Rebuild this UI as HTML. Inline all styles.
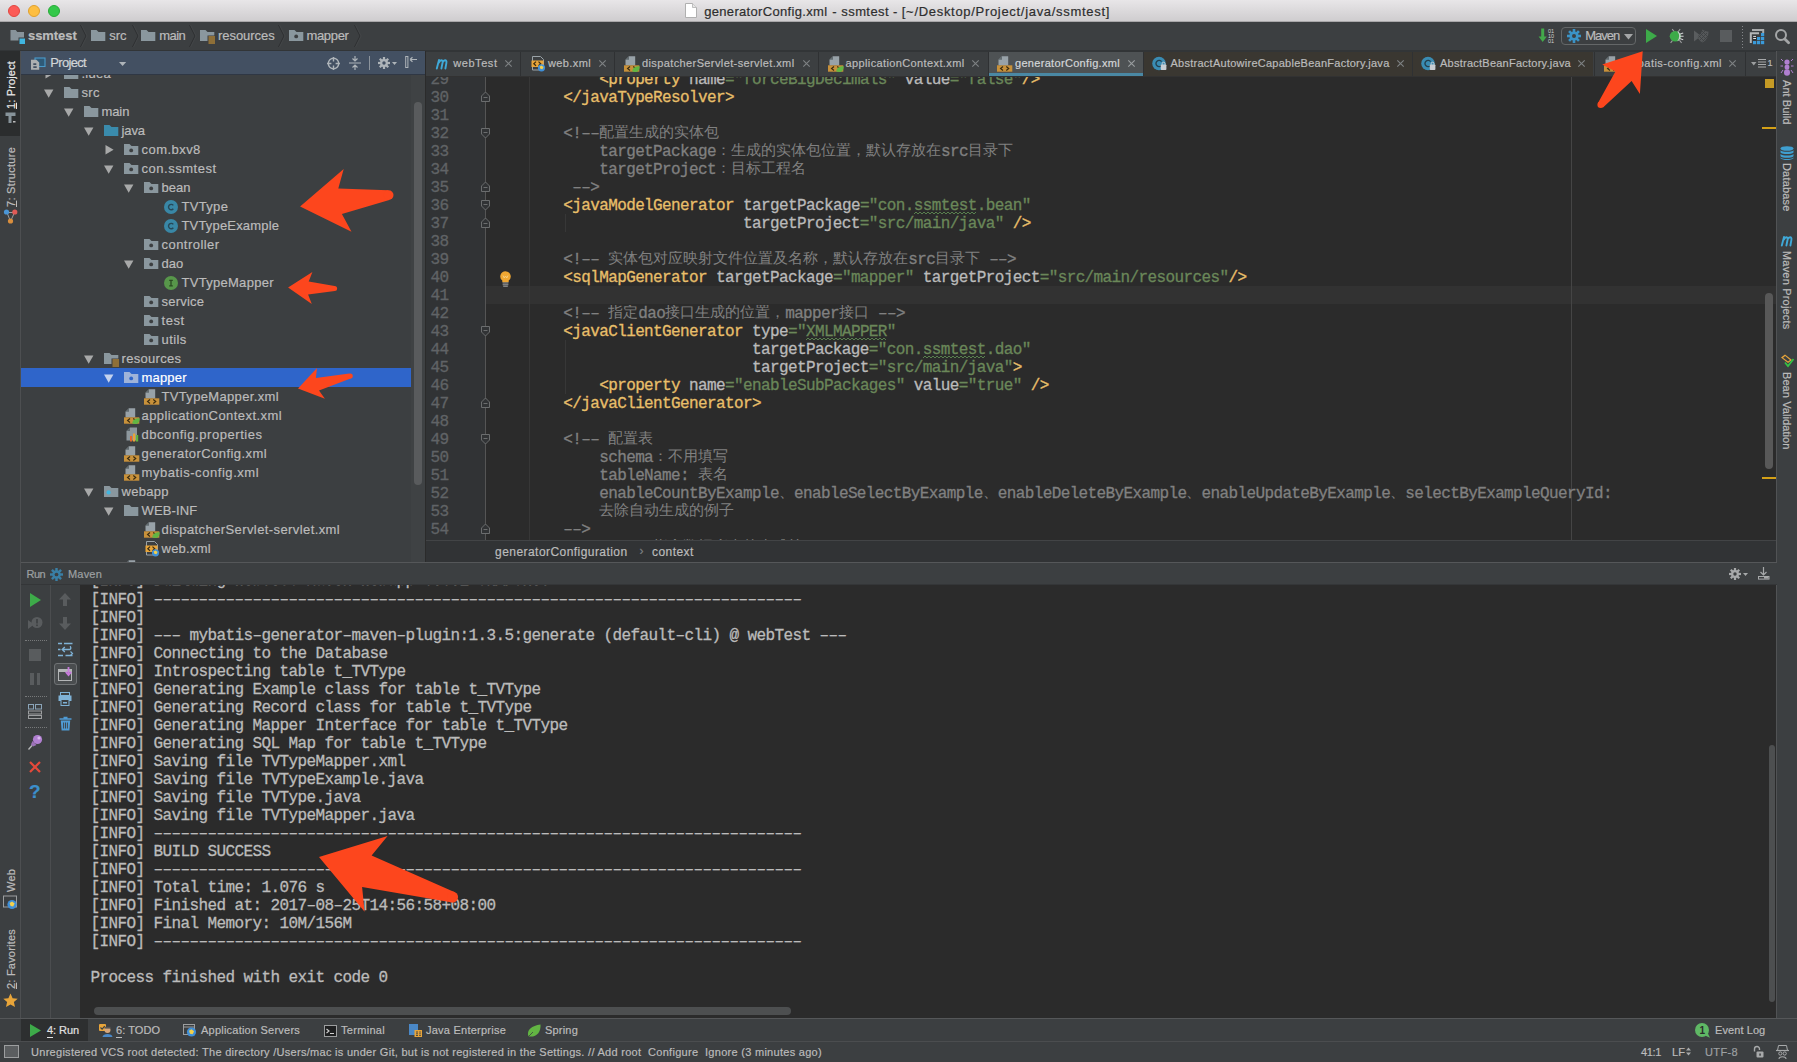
<!DOCTYPE html>
<html lang="en"><head><meta charset="utf-8"><title>generatorConfig.xml - ssmtest</title>
<style>
html,body{margin:0;padding:0;background:#3c3f41;}
body{width:1797px;height:1062px;overflow:hidden;font-family:"Liberation Sans",sans-serif;font-size:13px;color:#bbb;}
#app{position:relative;width:1797px;height:1062px;overflow:hidden;background:#3c3f41;}
.a{position:absolute;}
.t{position:absolute;white-space:pre;-webkit-text-stroke:0.2px;}
.r{position:absolute;}
svg{position:absolute;overflow:visible;}
#titlebar{left:0;top:0;width:1797px;height:22px;background:linear-gradient(#e8e6e8,#cfcdcf);border-bottom:1px solid #a9a7a9;box-sizing:border-box;}
.light{position:absolute;top:5px;width:12px;height:12px;border-radius:50%;box-sizing:border-box;}
#editor{left:426px;top:77px;width:1350px;height:463px;background:#2b2b2b;overflow:hidden;}
#gutter{left:0;top:0;width:59px;height:465px;background:#313335;border-right:1px solid #555;}
.ln{position:absolute;left:0;width:22.6px;text-align:right;font-family:"Liberation Mono",monospace;font-size:16px;letter-spacing:-0.6px;color:#606366;height:18px;line-height:18px;-webkit-text-stroke:0.3px;}
.cl{position:absolute;left:65.3px;height:18px;line-height:18px;font-family:"Liberation Mono",monospace;font-size:16px;letter-spacing:-0.613px;white-space:pre;color:#a9b7c6;-webkit-text-stroke:0.3px;}
.tg{color:#e8bf6a}.an{color:#bababa}.av{color:#6a8759}.cm{color:#808080}
.cj{display:inline-block;overflow:hidden;vertical-align:top;height:18px;white-space:nowrap;font-size:15px;letter-spacing:0;-webkit-text-stroke:0;}
.wv{position:relative;display:inline-block;}
#console{left:80px;top:585px;width:1696px;height:433px;background:#2b2b2b;overflow:hidden;}
.co{position:absolute;left:10.45px;height:18px;line-height:18px;font-family:"Liberation Mono",monospace;font-size:16px;letter-spacing:-0.6px;white-space:pre;color:#bbb;-webkit-text-stroke:0.3px;}
#tree{left:21px;top:75px;width:404px;height:487px;overflow:hidden;background:#3c3f41;}
.vt{position:absolute;white-space:pre;font-size:11px;color:#bbb;transform-origin:0 0;height:14px;line-height:14px;}

u{text-decoration:underline;text-underline-offset:1px;}

</style></head>
<body>
<div id="app">
<div id="titlebar" class="a">
<div class="light" style="left:8px;background:#fc5b57;border:1px solid #e2463f"></div>
<div class="light" style="left:28px;background:#fdbe41;border:1px solid #e0a02d"></div>
<div class="light" style="left:48px;background:#34c84a;border:1px solid #27ab37"></div>
<svg style="left:685px;top:3px" width="12" height="15" viewBox="0 0 12 15"><path d="M0.5,0.5h7l4,4v10h-11z" fill="#fff" stroke="#b0b0b0" stroke-width="1"/><path d="M7.5,0.5v4h4" fill="#e6e6e6" stroke="#b0b0b0" stroke-width="0.8"/></svg>
<div class="t " style="left:704.2px;top:2px;height:20px;line-height:20px;font-size:13px;color:#2e2e2e;letter-spacing:0.323px;">generatorConfig.xml</div>
<div class="t " style="left:832.3px;top:2px;height:20px;line-height:20px;font-size:13px;color:#2e2e2e;">-</div>
<div class="t " style="left:841.3px;top:2px;height:20px;line-height:20px;font-size:13px;color:#2e2e2e;letter-spacing:0.415px;">ssmtest</div>
<div class="t " style="left:892.9px;top:2px;height:20px;line-height:20px;font-size:13px;color:#2e2e2e;">-</div>
<div class="t " style="left:901.8px;top:2px;height:20px;line-height:20px;font-size:13px;color:#2e2e2e;letter-spacing:0.692px;">[~/Desktop/Project/java/ssmtest]</div>
</div>
<div class="r" style="left:0px;top:22px;width:1797px;height:29px;background:#3c3f41;"></div>
<div class="r" style="left:0px;top:50px;width:1797px;height:1px;background:#323537;"></div>
<svg style="left:10px;top:29px" width="16" height="15" viewBox="0 0 16 15"><path d="M0.5,1h5.2l1.6,2H14v8.5H0.5z" fill="#87939a"/><rect x="8.5" y="8.5" width="6.5" height="6.5" fill="#3c3f41"/><rect x="9.5" y="9.5" width="5.5" height="5.5" fill="#40b6e0"/></svg>
<div class="t " style="left:28px;top:22px;height:28px;line-height:28px;font-size:13px;color:#bbb;font-weight:bold;letter-spacing:-0.063px;">ssmtest</div>
<svg style="left:80px;top:25px" width="7" height="22" viewBox="0 0 7 22"><path d="M0.5,0L6,11L0.5,22" fill="none" stroke="#2c2e30" stroke-width="1"/><path d="M1.5,0L7,11L1.5,22" fill="none" stroke="#484b4d" stroke-width="0.6"/></svg>
<svg style="left:90.8px;top:30px" width="16" height="14" viewBox="0 0 16 14"><path d="M0,0h5.5l2,2H14.3v9H0z" fill="#8a979e"/></svg>
<div class="t " style="left:109.2px;top:22px;height:28px;line-height:28px;font-size:13px;color:#bbb;letter-spacing:0.052px;">src</div>
<svg style="left:131.5px;top:25px" width="7" height="22" viewBox="0 0 7 22"><path d="M0.5,0L6,11L0.5,22" fill="none" stroke="#2c2e30" stroke-width="1"/><path d="M1.5,0L7,11L1.5,22" fill="none" stroke="#484b4d" stroke-width="0.6"/></svg>
<svg style="left:140.8px;top:30px" width="16" height="14" viewBox="0 0 16 14"><path d="M0,0h5.5l2,2H14.3v9H0z" fill="#8a979e"/></svg>
<div class="t " style="left:159.2px;top:22px;height:28px;line-height:28px;font-size:13px;color:#bbb;letter-spacing:-0.522px;">main</div>
<svg style="left:189px;top:25px" width="7" height="22" viewBox="0 0 7 22"><path d="M0.5,0L6,11L0.5,22" fill="none" stroke="#2c2e30" stroke-width="1"/><path d="M1.5,0L7,11L1.5,22" fill="none" stroke="#484b4d" stroke-width="0.6"/></svg>
<svg style="left:199.7px;top:30px" width="16" height="14" viewBox="0 0 16 14"><path d="M0,0h5.5l2,2H14.3v9H0z" fill="#8a979e"/><rect x="7.5" y="5.5" width="8" height="8" fill="#3c3f41"/><path d="M8.5,7h6.5M8.5,9h6.5M8.5,11h6.5M8.5,13h6.5" stroke="#e0a030" stroke-width="1"/></svg>
<div class="t " style="left:218px;top:22px;height:28px;line-height:28px;font-size:13px;color:#bbb;letter-spacing:-0.042px;">resources</div>
<svg style="left:278px;top:25px" width="7" height="22" viewBox="0 0 7 22"><path d="M0.5,0L6,11L0.5,22" fill="none" stroke="#2c2e30" stroke-width="1"/><path d="M1.5,0L7,11L1.5,22" fill="none" stroke="#484b4d" stroke-width="0.6"/></svg>
<svg style="left:288.5px;top:30px" width="16" height="14" viewBox="0 0 16 14"><path d="M0,0h5.5l2,2H14.3v9H0z" fill="#8a979e"/><circle cx="7.2" cy="6.4" r="1.9" fill="#3c3f41"/></svg>
<div class="t " style="left:306.5px;top:22px;height:28px;line-height:28px;font-size:13px;color:#bbb;letter-spacing:-0.346px;">mapper</div>
<svg style="left:354px;top:25px" width="7" height="22" viewBox="0 0 7 22"><path d="M0.5,0L6,11L0.5,22" fill="none" stroke="#2c2e30" stroke-width="1"/><path d="M1.5,0L7,11L1.5,22" fill="none" stroke="#484b4d" stroke-width="0.6"/></svg>
<svg style="left:1539px;top:28px" width="16" height="16" viewBox="0 0 16 16"><path d="M2.2,0.5h3v8h2.6l-4.1,5.5l-4.1,-5.5h2.6z" fill="#43a84b"/><g fill="#d0d0d0" font-family="Liberation Sans" font-size="5.5"><text x="9" y="5">01</text><text x="9" y="10">10</text><text x="9" y="15">01</text></g></svg>
<div class="r" style="left:1561px;top:27px;width:75px;height:18px;border:1px solid #646768;border-radius:4px;box-sizing:border-box;background:#3c3f41"></div>
<svg style="left:1567px;top:29px" width="14" height="14" viewBox="0 0 14 14"><g fill="#3b93c6"><circle cx="7" cy="7" r="4.6"/><rect x="5.7" y="0" width="2.6" height="14" transform="rotate(0 7 7)"/><rect x="5.7" y="0" width="2.6" height="14" transform="rotate(45 7 7)"/><rect x="5.7" y="0" width="2.6" height="14" transform="rotate(90 7 7)"/><rect x="5.7" y="0" width="2.6" height="14" transform="rotate(135 7 7)"/></g><circle cx="7" cy="7" r="2" fill="#3c3f41"/></svg>
<div class="t " style="left:1585.3px;top:27px;height:18px;line-height:18px;font-size:13px;color:#bbb;letter-spacing:-1.026px;">Maven</div>
<svg style="left:1623.5px;top:33.5px" width="9" height="6" viewBox="0 0 9 6"><path d="M0,0h9L4.5,5.5z" fill="#a4a6a7"/></svg>
<svg style="left:1646px;top:29px" width="11" height="14" viewBox="0 0 11 14"><path d="M0,0L11,7L0,14z" fill="#3daa49"/></svg>
<svg style="left:1669px;top:28px" width="15" height="16" viewBox="0 0 15 16"><path d="M3.2,1.2l2.3,2.8M11.2,1.2l-2.3,2.8M1.6,14.8l2.2,-2.6M12.6,14.8l-2.2,-2.6" stroke="#9c9e9f" stroke-width="1.1" fill="none"/><ellipse cx="6.3" cy="8.3" rx="5.6" ry="5.3" fill="#3daa49"/><path d="M8.2,3.3a5.4,5.4 0 0 1 0,10a8,8 0 0 0 0,-10z" fill="#cfd1d2"/><path d="M10.6,6.2l3.6,-1.2M11,8.3h3.6M10.6,10.6l3.6,1.2" stroke="#cfd1d2" stroke-width="1.1"/></svg>
<svg style="left:1693px;top:28px" width="16" height="16" viewBox="0 0 16 16"><path d="M1,2.5L8,8L1,13.5z" fill="#5a5d5f"/><path d="M9.5,1.5c2,1.5 4,2 6,2c0,5 -2,9 -6,11c-2.5,-1.2 -4.2,-3.3 -5.2,-6l3.7,-3z" fill="#55585a"/><path d="M7,5l7,7M9,3l6,6M5.5,7.5l6,6" stroke="#3c3f41" stroke-width="0.8"/><path d="M7,12l7,-7M5.5,9.5l7.5,-7.5M9.5,13.5l5,-5" stroke="#3c3f41" stroke-width="0.8"/></svg>
<div class="r" style="left:1720px;top:30px;width:12px;height:12px;background:#595c5e;"></div>
<div class="r" style="left:1742px;top:26px;width:1px;height:23px;background:repeating-linear-gradient(to bottom,#85878a 0,#85878a 1px,transparent 1px,transparent 3px)"></div>
<svg style="left:1749px;top:28px" width="16" height="16" viewBox="0 0 16 16"><path d="M3,2h11.2v3" fill="none" stroke="#a9abac" stroke-width="2"/><path d="M1.8,15V5.3h8.2" fill="none" stroke="#b4b6b7" stroke-width="2"/><rect x="3.6" y="7" width="4" height="5.5" fill="#2f3133"/><path d="M4.2,8.4h2.8M4.2,10.5h2.8" stroke="#e0e0e0" stroke-width="1"/><g fill="#3a9ad9"><rect x="12" y="5" width="3.2" height="3.2"/><rect x="8" y="9" width="3.2" height="3.2"/><rect x="12" y="9" width="3.2" height="3.2"/><rect x="4" y="13" width="3.2" height="3.2"/><rect x="8" y="13" width="3.2" height="3.2"/><rect x="12" y="13" width="3.2" height="3.2"/></g></svg>
<svg style="left:1775px;top:29px" width="16" height="16" viewBox="0 0 16 16"><circle cx="6" cy="6.1" r="5" fill="none" stroke="#a4a6a7" stroke-width="2"/><path d="M9.8,9.9L13.6,13.7" stroke="#a4a6a7" stroke-width="2.8" stroke-linecap="round"/></svg>
<div class="r" style="left:0px;top:51px;width:21px;height:967px;background:#3c3f41;"></div>
<div class="r" style="left:19.5px;top:51px;width:1px;height:967px;background:#4d4f51;"></div>
<div class="r" style="left:0px;top:51px;width:20px;height:85px;background:#2b2d2e;"></div>
<div class="a" style="left:3.5px;top:109px;width:0;height:0;transform:rotate(-90deg);transform-origin:0 0"><div class="t " style="left:0px;top:0px;height:14px;line-height:14px;font-size:11px;color:#e8e8e8;position:static;display:block;letter-spacing:0.153px;"><u>1</u>: Project</div></div>
<svg style="left:5px;top:112px" width="11" height="12" viewBox="0 0 11 12"><path d="M0.5,0.5h10v3.5h-4v7h-3v-7h-3z" fill="#87939a"/><rect x="8" y="9" width="2.5" height="1.5" fill="#bbb"/></svg>
<div class="a" style="left:3.5px;top:207px;width:0;height:0;transform:rotate(-90deg);transform-origin:0 0"><div class="t " style="left:0px;top:0px;height:14px;line-height:14px;font-size:11px;color:#bbb;position:static;display:block;letter-spacing:0.262px;"><u>7</u>: Structure</div></div>
<svg style="left:3px;top:209px" width="15" height="15" viewBox="0 0 15 15"><path d="M4,3.5L7.5,12.5L11.5,3.5z" fill="none" stroke="#9c9e9f" stroke-width="1"/><circle cx="3.5" cy="3" r="2.6" fill="#4a96d6"/><circle cx="11.8" cy="3" r="2.6" fill="#e05a56"/><circle cx="7.5" cy="12" r="2.6" fill="#d88e3d"/></svg>
<div class="a" style="left:3.5px;top:892px;width:0;height:0;transform:rotate(-90deg);transform-origin:0 0"><div class="t " style="left:0px;top:0px;height:14px;line-height:14px;font-size:11px;color:#bbb;position:static;display:block;letter-spacing:0.193px;">Web</div></div>
<svg style="left:3px;top:895px" width="15" height="15" viewBox="0 0 15 15"><rect x="0.5" y="1" width="13" height="11" fill="none" stroke="#9c9e9f"/><circle cx="9" cy="9.5" r="4.6" fill="#3f8fd8"/><path d="M6.6,8l2.5,-1.6l2.6,2l-1.5,3l-2.6,-0.5z" fill="#f3d04c"/></svg>
<div class="a" style="left:3.5px;top:989px;width:0;height:0;transform:rotate(-90deg);transform-origin:0 0"><div class="t " style="left:0px;top:0px;height:14px;line-height:14px;font-size:11px;color:#bbb;position:static;display:block;letter-spacing:0.211px;"><u>2</u>: Favorites</div></div>
<svg style="left:3px;top:993px" width="15" height="14" viewBox="0 0 15 14"><path d="M7.5,0.5L9.6,5.2L14.7,5.7L10.9,9.1L12,14L7.5,11.4L3,14L4.1,9.1L0.3,5.7L5.4,5.2z" fill="#e8a53a"/></svg>
<div class="r" style="left:21px;top:51px;width:404px;height:23px;background:#435062;"></div>
<div class="r" style="left:21px;top:73.7px;width:404px;height:1px;background:#2f3744;"></div>
<svg style="left:30.8px;top:56.5px" width="15" height="13" viewBox="0 0 15 13"><rect x="4" y="1" width="10" height="8.5" fill="#2f5a78" stroke="#4a9bcb" stroke-width="1.1"/><path d="M0,2.8h5.4l2.8,2.8v7.2H0z" fill="#adafb1"/><path d="M2.3,6.3h3v1.8h-3zM2.3,9.2h3.4v1.8h-3.4z" fill="#435062"/></svg>
<div class="t " style="left:50.3px;top:52px;height:22px;line-height:22px;font-size:13px;color:#d2d5d8;letter-spacing:-0.681px;">Project</div>
<svg style="left:118.7px;top:62px" width="8" height="5" viewBox="0 0 8 5"><path d="M0,0h7.2L3.6,4z" fill="#aeb4b9"/></svg>
<svg style="left:327px;top:56.5px" width="13" height="13" viewBox="0 0 13 13"><circle cx="6.5" cy="6.5" r="5.2" fill="none" stroke="#aeb4b9" stroke-width="1.4"/><path d="M6.5,0v4.4M6.5,8.6v4.4M0,6.5h4.4M8.6,6.5h4.4" stroke="#aeb4b9" stroke-width="1.4"/></svg>
<svg style="left:349px;top:56px" width="12" height="14" viewBox="0 0 12 14"><path d="M0,7h12M6,0v4.5M6,14v-4.5M3.5,2.5L6,5L8.5,2.5M3.5,11.5L6,9L8.5,11.5" fill="none" stroke="#aeb4b9" stroke-width="1.2"/></svg>
<div class="r" style="left:369px;top:56px;width:1px;height:14px;background:#8c949c;"></div>
<svg style="left:378px;top:56.5px" width="12" height="12" viewBox="0 0 14 14"><g fill="#aeb4b9"><circle cx="7" cy="7" r="4.6"/><rect x="5.7" y="0" width="2.6" height="14" transform="rotate(0 7 7)"/><rect x="5.7" y="0" width="2.6" height="14" transform="rotate(45 7 7)"/><rect x="5.7" y="0" width="2.6" height="14" transform="rotate(90 7 7)"/><rect x="5.7" y="0" width="2.6" height="14" transform="rotate(135 7 7)"/></g><circle cx="7" cy="7" r="2" fill="#435062"/></svg>
<svg style="left:391.5px;top:62px" width="5" height="3" viewBox="0 0 5 3"><path d="M0,0h5L2.5,3z" fill="#aeb4b9"/></svg>
<svg style="left:405px;top:56px" width="13" height="13" viewBox="0 0 13 13"><rect x="0.7" y="0.5" width="2.2" height="11" fill="none" stroke="#aeb4b9" stroke-width="1"/><path d="M5,3.5h7M5,3.5l2.5,-2.2M5,3.5l2.5,2.2" stroke="#aeb4b9" stroke-width="1.2" fill="none"/></svg>
<div id="tree" class="a">
<svg style="left:24px;top:-6px" width="9" height="10" viewBox="0 0 9 10"><path d="M0.5,0L8.6,4.7L0.5,9.4z" fill="#a8a9a9"/></svg>
<svg style="left:43px;top:-7px" width="16" height="14" viewBox="0 0 16 14"><path d="M0,0h5.5l2,2H14.3v9H0z" fill="#8a979e"/></svg>
<div class="t " style="left:60.5px;top:-11px;height:19px;line-height:19px;font-size:13px;color:#bbb;letter-spacing:0.259px;">.idea</div>
<svg style="left:23px;top:14px" width="10" height="9" viewBox="0 0 10 9"><path d="M0,0.5h9.4L4.7,8.8z" fill="#a8a9a9"/></svg>
<svg style="left:43px;top:12px" width="16" height="14" viewBox="0 0 16 14"><path d="M0,0h5.5l2,2H14.3v9H0z" fill="#8a979e"/></svg>
<div class="t " style="left:60.5px;top:8px;height:19px;line-height:19px;font-size:13px;color:#bbb;letter-spacing:0.352px;">src</div>
<svg style="left:43px;top:33px" width="10" height="9" viewBox="0 0 10 9"><path d="M0,0.5h9.4L4.7,8.8z" fill="#a8a9a9"/></svg>
<svg style="left:63px;top:31px" width="16" height="14" viewBox="0 0 16 14"><path d="M0,0h5.5l2,2H14.3v9H0z" fill="#8a979e"/></svg>
<div class="t " style="left:80.5px;top:27px;height:19px;line-height:19px;font-size:13px;color:#bbb;letter-spacing:-0.097px;">main</div>
<svg style="left:63px;top:52px" width="10" height="9" viewBox="0 0 10 9"><path d="M0,0.5h9.4L4.7,8.8z" fill="#a8a9a9"/></svg>
<svg style="left:83px;top:50px" width="16" height="14" viewBox="0 0 16 14"><path d="M0,0h5.5l2,2H14.3v9H0z" fill="#3a8bac"/></svg>
<div class="t " style="left:100.5px;top:46px;height:19px;line-height:19px;font-size:13px;color:#bbb;letter-spacing:-0.090px;">java</div>
<svg style="left:84px;top:70px" width="9" height="10" viewBox="0 0 9 10"><path d="M0.5,0L8.6,4.7L0.5,9.4z" fill="#a8a9a9"/></svg>
<svg style="left:103px;top:69px" width="16" height="14" viewBox="0 0 16 14"><path d="M0,0h5.5l2,2H14.3v9H0z" fill="#8a979e"/><circle cx="7.2" cy="6.4" r="1.9" fill="#3c3f41"/></svg>
<div class="t " style="left:120.5px;top:65px;height:19px;line-height:19px;font-size:13px;color:#bbb;letter-spacing:0.457px;">com.bxv8</div>
<svg style="left:83px;top:90px" width="10" height="9" viewBox="0 0 10 9"><path d="M0,0.5h9.4L4.7,8.8z" fill="#a8a9a9"/></svg>
<svg style="left:103px;top:88px" width="16" height="14" viewBox="0 0 16 14"><path d="M0,0h5.5l2,2H14.3v9H0z" fill="#8a979e"/><circle cx="7.2" cy="6.4" r="1.9" fill="#3c3f41"/></svg>
<div class="t " style="left:120.5px;top:84px;height:19px;line-height:19px;font-size:13px;color:#bbb;letter-spacing:0.531px;">con.ssmtest</div>
<svg style="left:103px;top:109px" width="10" height="9" viewBox="0 0 10 9"><path d="M0,0.5h9.4L4.7,8.8z" fill="#a8a9a9"/></svg>
<svg style="left:123px;top:107px" width="16" height="14" viewBox="0 0 16 14"><path d="M0,0h5.5l2,2H14.3v9H0z" fill="#8a979e"/><circle cx="7.2" cy="6.4" r="1.9" fill="#3c3f41"/></svg>
<div class="t " style="left:140.5px;top:103px;height:19px;line-height:19px;font-size:13px;color:#bbb;letter-spacing:0.020px;">bean</div>
<svg style="left:143px;top:125px" width="14" height="14" viewBox="0 0 14 14"><circle cx="7" cy="7" r="7" fill="#3987a6"/><path d="M9.3,5.4A2.7,2.7 0 1 0 9.3,8.8" fill="none" stroke="#264858" stroke-width="1.4"/></svg>
<div class="t " style="left:160.5px;top:122px;height:19px;line-height:19px;font-size:13px;color:#bbb;letter-spacing:0.317px;">TVType</div>
<svg style="left:143px;top:144px" width="14" height="14" viewBox="0 0 14 14"><circle cx="7" cy="7" r="7" fill="#3987a6"/><path d="M9.3,5.4A2.7,2.7 0 1 0 9.3,8.8" fill="none" stroke="#264858" stroke-width="1.4"/></svg>
<div class="t " style="left:160.5px;top:141px;height:19px;line-height:19px;font-size:13px;color:#bbb;letter-spacing:0.171px;">TVTypeExample</div>
<svg style="left:123px;top:164px" width="16" height="14" viewBox="0 0 16 14"><path d="M0,0h5.5l2,2H14.3v9H0z" fill="#8a979e"/><circle cx="7.2" cy="6.4" r="1.9" fill="#3c3f41"/></svg>
<div class="t " style="left:140.5px;top:160px;height:19px;line-height:19px;font-size:13px;color:#bbb;letter-spacing:0.463px;">controller</div>
<svg style="left:103px;top:185px" width="10" height="9" viewBox="0 0 10 9"><path d="M0,0.5h9.4L4.7,8.8z" fill="#a8a9a9"/></svg>
<svg style="left:123px;top:183px" width="16" height="14" viewBox="0 0 16 14"><path d="M0,0h5.5l2,2H14.3v9H0z" fill="#8a979e"/><circle cx="7.2" cy="6.4" r="1.9" fill="#3c3f41"/></svg>
<div class="t " style="left:140.5px;top:179px;height:19px;line-height:19px;font-size:13px;color:#bbb;letter-spacing:-0.001px;">dao</div>
<svg style="left:143px;top:201px" width="14" height="14" viewBox="0 0 14 14"><circle cx="7" cy="7" r="7" fill="#57964a"/><path d="M5.2,4.4h3.6M5.2,9.8h3.6M7,4.4v5.4" fill="none" stroke="#2a4a22" stroke-width="1.3"/></svg>
<div class="t " style="left:160.5px;top:198px;height:19px;line-height:19px;font-size:13px;color:#bbb;letter-spacing:0.285px;">TVTypeMapper</div>
<svg style="left:123px;top:221px" width="16" height="14" viewBox="0 0 16 14"><path d="M0,0h5.5l2,2H14.3v9H0z" fill="#8a979e"/><circle cx="7.2" cy="6.4" r="1.9" fill="#3c3f41"/></svg>
<div class="t " style="left:140.5px;top:217px;height:19px;line-height:19px;font-size:13px;color:#bbb;letter-spacing:0.216px;">service</div>
<svg style="left:123px;top:240px" width="16" height="14" viewBox="0 0 16 14"><path d="M0,0h5.5l2,2H14.3v9H0z" fill="#8a979e"/><circle cx="7.2" cy="6.4" r="1.9" fill="#3c3f41"/></svg>
<div class="t " style="left:140.5px;top:236px;height:19px;line-height:19px;font-size:13px;color:#bbb;letter-spacing:0.533px;">test</div>
<svg style="left:123px;top:259px" width="16" height="14" viewBox="0 0 16 14"><path d="M0,0h5.5l2,2H14.3v9H0z" fill="#8a979e"/><circle cx="7.2" cy="6.4" r="1.9" fill="#3c3f41"/></svg>
<div class="t " style="left:140.5px;top:255px;height:19px;line-height:19px;font-size:13px;color:#bbb;letter-spacing:0.415px;">utils</div>
<svg style="left:63px;top:280px" width="10" height="9" viewBox="0 0 10 9"><path d="M0,0.5h9.4L4.7,8.8z" fill="#a8a9a9"/></svg>
<svg style="left:83px;top:278px" width="16" height="14" viewBox="0 0 16 14"><path d="M0,0h5.5l2,2H14.3v9H0z" fill="#8a979e"/><rect x="7.5" y="5.5" width="8" height="8" fill="#3c3f41"/><path d="M8.5,7h6.5M8.5,9h6.5M8.5,11h6.5M8.5,13h6.5" stroke="#e0a030" stroke-width="1"/></svg>
<div class="t " style="left:100.5px;top:274px;height:19px;line-height:19px;font-size:13px;color:#bbb;letter-spacing:0.314px;">resources</div>
<div class="r" style="left:0px;top:293px;width:390px;height:19px;background:#2f65ca;"></div>
<svg style="left:83px;top:299px" width="10" height="9" viewBox="0 0 10 9"><path d="M0,0.5h9.4L4.7,8.8z" fill="#c4d2ee"/></svg>
<svg style="left:103px;top:297px" width="16" height="14" viewBox="0 0 16 14"><path d="M0,0h5.5l2,2H14.3v9H0z" fill="#9fb3d9"/><circle cx="7.2" cy="6.4" r="1.9" fill="#2f65ca"/></svg>
<div class="t " style="left:120.5px;top:293px;height:19px;line-height:19px;font-size:13px;color:#fff;letter-spacing:0.187px;">mapper</div>
<svg style="left:122.7px;top:314px" width="16" height="16" viewBox="0 0 16 16"><path d="M5,0.3H11.2V9.4H1.5V3.8z" fill="#98a2a8"/><path d="M1.5,3.8L5,0.3V3.8z" fill="#626b70"/><rect x="0" y="9.3" width="15.3" height="6.4" fill="#c8913a"/><path d="M6,10.5L3.6,12.5L6,14.5M9.3,10.5L11.7,12.5L9.3,14.5" fill="none" stroke="#3a2c12" stroke-width="1.2"/></svg>
<div class="t " style="left:140.5px;top:312px;height:19px;line-height:19px;font-size:13px;color:#bbb;letter-spacing:0.337px;">TVTypeMapper.xml</div>
<svg style="left:102.7px;top:333px" width="16" height="16" viewBox="0 0 16 16"><path d="M5,0.3H11.2V9.4H1.5V3.8z" fill="#98a2a8"/><path d="M1.5,3.8L5,0.3V3.8z" fill="#626b70"/><rect x="0" y="9.3" width="15.3" height="6.4" fill="#c8913a"/><path d="M6,10.5L3.6,12.5L6,14.5M9.3,10.5L11.7,12.5L9.3,14.5" fill="none" stroke="#3a2c12" stroke-width="1.2"/><path d="M8.3,15.6c0,-3.8 3,-5.4 7.4,-5.4c0,4.2 -2.2,7 -7.4,5.4z" fill="#62b543"/></svg>
<div class="t " style="left:120.5px;top:331px;height:19px;line-height:19px;font-size:13px;color:#bbb;letter-spacing:0.446px;">applicationContext.xml</div>
<svg style="left:102.5px;top:351.5px" width="16" height="16" viewBox="0 0 16 16"><path d="M6,0.5h7v13H2.5V4z" fill="#8d979d"/><path d="M2.5,4L6,0.5V4z" fill="#5d666b"/><rect x="6" y="9" width="2.2" height="5.5" fill="#e0662c"/><rect x="9" y="6.5" width="2.2" height="8" fill="#e8a53a"/><rect x="12" y="8" width="2.2" height="6.5" fill="#5fb33f"/></svg>
<div class="t " style="left:120.5px;top:350px;height:19px;line-height:19px;font-size:13px;color:#bbb;letter-spacing:0.554px;">dbconfig.properties</div>
<svg style="left:102.7px;top:371px" width="16" height="16" viewBox="0 0 16 16"><path d="M5,0.3H11.2V9.4H1.5V3.8z" fill="#98a2a8"/><path d="M1.5,3.8L5,0.3V3.8z" fill="#626b70"/><rect x="0" y="9.3" width="15.3" height="6.4" fill="#c8913a"/><path d="M6,10.5L3.6,12.5L6,14.5M9.3,10.5L11.7,12.5L9.3,14.5" fill="none" stroke="#3a2c12" stroke-width="1.2"/></svg>
<div class="t " style="left:120.5px;top:369px;height:19px;line-height:19px;font-size:13px;color:#bbb;letter-spacing:0.449px;">generatorConfig.xml</div>
<svg style="left:102.7px;top:390px" width="16" height="16" viewBox="0 0 16 16"><path d="M5,0.3H11.2V9.4H1.5V3.8z" fill="#98a2a8"/><path d="M1.5,3.8L5,0.3V3.8z" fill="#626b70"/><rect x="0" y="9.3" width="15.3" height="6.4" fill="#c8913a"/><path d="M6,10.5L3.6,12.5L6,14.5M9.3,10.5L11.7,12.5L9.3,14.5" fill="none" stroke="#3a2c12" stroke-width="1.2"/></svg>
<div class="t " style="left:120.5px;top:388px;height:19px;line-height:19px;font-size:13px;color:#bbb;letter-spacing:0.559px;">mybatis-config.xml</div>
<svg style="left:63px;top:413px" width="10" height="9" viewBox="0 0 10 9"><path d="M0,0.5h9.4L4.7,8.8z" fill="#a8a9a9"/></svg>
<svg style="left:83px;top:411px" width="16" height="14" viewBox="0 0 16 14"><path d="M0,0h5.5l2,2H14.3v9H0z" fill="#8a979e"/><circle cx="4.6" cy="6.4" r="2.1" fill="#40b6e0"/></svg>
<div class="t " style="left:100.5px;top:407px;height:19px;line-height:19px;font-size:13px;color:#bbb;letter-spacing:0.276px;">webapp</div>
<svg style="left:83px;top:432px" width="10" height="9" viewBox="0 0 10 9"><path d="M0,0.5h9.4L4.7,8.8z" fill="#a8a9a9"/></svg>
<svg style="left:103px;top:430px" width="16" height="14" viewBox="0 0 16 14"><path d="M0,0h5.5l2,2H14.3v9H0z" fill="#8a979e"/></svg>
<div class="t " style="left:120.5px;top:426px;height:19px;line-height:19px;font-size:13px;color:#bbb;letter-spacing:0.116px;">WEB-INF</div>
<svg style="left:122.7px;top:447px" width="16" height="16" viewBox="0 0 16 16"><path d="M5,0.3H11.2V9.4H1.5V3.8z" fill="#98a2a8"/><path d="M1.5,3.8L5,0.3V3.8z" fill="#626b70"/><rect x="0" y="9.3" width="15.3" height="6.4" fill="#c8913a"/><path d="M6,10.5L3.6,12.5L6,14.5M9.3,10.5L11.7,12.5L9.3,14.5" fill="none" stroke="#3a2c12" stroke-width="1.2"/><path d="M8.3,15.6c0,-3.8 3,-5.4 7.4,-5.4c0,4.2 -2.2,7 -7.4,5.4z" fill="#62b543"/></svg>
<div class="t " style="left:140.5px;top:445px;height:19px;line-height:19px;font-size:13px;color:#bbb;letter-spacing:0.404px;">dispatcherServlet-servlet.xml</div>
<svg style="left:122.5px;top:465.5px" width="16" height="16" viewBox="0 0 16 16"><path d="M2.5,0.5h8l3,3v10.5h-11z" fill="none" stroke="#9aa3a8" stroke-width="1"/><rect x="1.5" y="4.5" width="12" height="6.5" fill="#e8a53a"/><path d="M6,5.6L3.8,7.7L6,9.8M8.5,5.6L10.7,7.7L8.5,9.8" fill="none" stroke="#3a2c12" stroke-width="1.2"/><circle cx="11.5" cy="11.8" r="3.6" fill="#3f8fd8"/><path d="M9.6,10.6l2,-1.2l2,1.5l-1.2,2.3l-2,-0.4z" fill="#f3d04c"/></svg>
<div class="t " style="left:140.5px;top:464px;height:19px;line-height:19px;font-size:13px;color:#bbb;letter-spacing:0.245px;">web.xml</div>
<svg style="left:102.7px;top:485px" width="16" height="16" viewBox="0 0 16 16"><path d="M5,0.3H11.2V9.4H1.5V3.8z" fill="#98a2a8"/><path d="M1.5,3.8L5,0.3V3.8z" fill="#626b70"/><rect x="0" y="9.3" width="15.3" height="6.4" fill="#c8913a"/><path d="M6,10.5L3.6,12.5L6,14.5M9.3,10.5L11.7,12.5L9.3,14.5" fill="none" stroke="#3a2c12" stroke-width="1.2"/></svg>
<div class="t " style="left:120.5px;top:483px;height:19px;line-height:19px;font-size:13px;color:#bbb;letter-spacing:-0.312px;">index.jsp</div>
<div class="r" style="left:390px;top:0px;width:14px;height:487px;background:#3f4244;"></div>
<div class="r" style="left:393px;top:27px;width:8px;height:383px;border-radius:4px;background:#595b5d"></div>
</div>
<div class="r" style="left:425px;top:51px;width:1px;height:512px;background:#2b2b2b;"></div>
<div class="r" style="left:426px;top:51px;width:1351px;height:26px;background:#3c3f41;"></div>
<div class="r" style="left:426px;top:51px;width:1351px;height:1px;background:#323537;"></div>
<div class="r" style="left:1143px;top:52px;width:450px;height:24px;background:#3a3731;"></div>
<div class="r" style="left:988px;top:52px;width:154.5px;height:24px;background:#4e5254;"></div>
<div class="r" style="left:988px;top:73px;width:154.5px;height:3px;background:#4a88a4;"></div>
<div class="r" style="left:426px;top:76px;width:1351px;height:1px;background:#323232;"></div>
<div class="r" style="left:520px;top:52px;width:1px;height:24px;background:#2f3133;"></div>
<div class="r" style="left:614px;top:52px;width:1px;height:24px;background:#2f3133;"></div>
<div class="r" style="left:817.5px;top:52px;width:1px;height:24px;background:#2f3133;"></div>
<div class="r" style="left:987.5px;top:52px;width:1px;height:24px;background:#2f3133;"></div>
<div class="r" style="left:1142.5px;top:52px;width:1px;height:24px;background:#2f3133;"></div>
<div class="r" style="left:1412px;top:52px;width:1px;height:24px;background:#2f3133;"></div>
<div class="r" style="left:1593.5px;top:52px;width:1px;height:24px;background:#2f3133;"></div>
<div class="r" style="left:1745px;top:52px;width:1px;height:24px;background:#2f3133;"></div>
<svg style="left:435px;top:57.5px" width="14" height="11" viewBox="0 0 14 11"><path d="M1.8,10.5L4,2M4,4.5C5,1.5 8,1.5 7.6,4.5L6.4,10.5M7.6,4.5C8.8,1.5 12,1.5 11.4,4.8L10.4,10.5" fill="none" stroke="#3fa9d8" stroke-width="1.9" stroke-linecap="round"/></svg>
<div class="t " style="left:453.3px;top:52px;height:23px;line-height:23px;font-size:11px;color:#bbb;letter-spacing:0.549px;">webTest</div>
<svg style="left:504.5px;top:59.5px" width="7" height="7" viewBox="0 0 7 7"><path d="M0.3,0.3L6.7,6.7M6.7,0.3L0.3,6.7" stroke="#7e8284" stroke-width="1.1"/></svg>
<svg style="left:530px;top:56px" width="16" height="16" viewBox="0 0 16 16"><path d="M2.5,0.5h8l3,3v10.5h-11z" fill="none" stroke="#9aa3a8" stroke-width="1"/><rect x="1.5" y="4.5" width="12" height="6.5" fill="#e8a53a"/><path d="M6,5.6L3.8,7.7L6,9.8M8.5,5.6L10.7,7.7L8.5,9.8" fill="none" stroke="#3a2c12" stroke-width="1.2"/><circle cx="11.5" cy="11.8" r="3.6" fill="#3f8fd8"/><path d="M9.6,10.6l2,-1.2l2,1.5l-1.2,2.3l-2,-0.4z" fill="#f3d04c"/></svg>
<div class="t " style="left:548px;top:52px;height:23px;line-height:23px;font-size:11px;color:#bbb;letter-spacing:0.379px;">web.xml</div>
<svg style="left:599.0px;top:59.5px" width="7" height="7" viewBox="0 0 7 7"><path d="M0.3,0.3L6.7,6.7M6.7,0.3L0.3,6.7" stroke="#7e8284" stroke-width="1.1"/></svg>
<svg style="left:623.8px;top:56px" width="16" height="16" viewBox="0 0 16 16"><path d="M5,0.3H11.2V9.4H1.5V3.8z" fill="#98a2a8"/><path d="M1.5,3.8L5,0.3V3.8z" fill="#626b70"/><rect x="0" y="9.3" width="15.3" height="6.4" fill="#c8913a"/><path d="M6,10.5L3.6,12.5L6,14.5M9.3,10.5L11.7,12.5L9.3,14.5" fill="none" stroke="#3a2c12" stroke-width="1.2"/><path d="M8.3,15.6c0,-3.8 3,-5.4 7.4,-5.4c0,4.2 -2.2,7 -7.4,5.4z" fill="#62b543"/></svg>
<div class="t " style="left:642px;top:52px;height:23px;line-height:23px;font-size:11px;color:#bbb;letter-spacing:0.389px;">dispatcherServlet-servlet.xml</div>
<svg style="left:802.5px;top:59.5px" width="7" height="7" viewBox="0 0 7 7"><path d="M0.3,0.3L6.7,6.7M6.7,0.3L0.3,6.7" stroke="#7e8284" stroke-width="1.1"/></svg>
<svg style="left:827.7px;top:56px" width="16" height="16" viewBox="0 0 16 16"><path d="M5,0.3H11.2V9.4H1.5V3.8z" fill="#98a2a8"/><path d="M1.5,3.8L5,0.3V3.8z" fill="#626b70"/><rect x="0" y="9.3" width="15.3" height="6.4" fill="#c8913a"/><path d="M6,10.5L3.6,12.5L6,14.5M9.3,10.5L11.7,12.5L9.3,14.5" fill="none" stroke="#3a2c12" stroke-width="1.2"/><path d="M8.3,15.6c0,-3.8 3,-5.4 7.4,-5.4c0,4.2 -2.2,7 -7.4,5.4z" fill="#62b543"/></svg>
<div class="t " style="left:845.5px;top:52px;height:23px;line-height:23px;font-size:11px;color:#bbb;letter-spacing:0.379px;">applicationContext.xml</div>
<svg style="left:972.0px;top:59.5px" width="7" height="7" viewBox="0 0 7 7"><path d="M0.3,0.3L6.7,6.7M6.7,0.3L0.3,6.7" stroke="#7e8284" stroke-width="1.1"/></svg>
<svg style="left:996.7px;top:56px" width="16" height="16" viewBox="0 0 16 16"><path d="M5,0.3H11.2V9.4H1.5V3.8z" fill="#98a2a8"/><path d="M1.5,3.8L5,0.3V3.8z" fill="#626b70"/><rect x="0" y="9.3" width="15.3" height="6.4" fill="#c8913a"/><path d="M6,10.5L3.6,12.5L6,14.5M9.3,10.5L11.7,12.5L9.3,14.5" fill="none" stroke="#3a2c12" stroke-width="1.2"/></svg>
<div class="t " style="left:1015px;top:52px;height:23px;line-height:23px;font-size:11px;color:#d4d6d8;letter-spacing:0.312px;">generatorConfig.xml</div>
<svg style="left:1127.5px;top:59.5px" width="7" height="7" viewBox="0 0 7 7"><path d="M0.3,0.3L6.7,6.7M6.7,0.3L0.3,6.7" stroke="#9a9ea0" stroke-width="1.1"/></svg>
<svg style="left:1152px;top:56px" width="15" height="15" viewBox="0 0 15 15"><circle cx="7" cy="7.5" r="6.8" fill="#3a8cb3"/><path d="M9.6,5.7A3.1,3.1 0 1 0 9.6,9.3" fill="none" stroke="#23404f" stroke-width="1.4"/><rect x="8.8" y="8.5" width="5.6" height="5.5" rx="0.8" fill="#c9ced2"/><path d="M10.2,8.8v-1.2a1.4,1.4 0 0 1 2.8,0v1.2" fill="none" stroke="#c9ced2" stroke-width="1"/></svg>
<div class="t " style="left:1170.5px;top:52px;height:23px;line-height:23px;font-size:11px;color:#bbb;letter-spacing:0.259px;">AbstractAutowireCapableBeanFactory.java</div>
<svg style="left:1397.0px;top:59.5px" width="7" height="7" viewBox="0 0 7 7"><path d="M0.3,0.3L6.7,6.7M6.7,0.3L0.3,6.7" stroke="#7e8284" stroke-width="1.1"/></svg>
<svg style="left:1421px;top:56px" width="15" height="15" viewBox="0 0 15 15"><circle cx="7" cy="7.5" r="6.8" fill="#3a8cb3"/><path d="M9.6,5.7A3.1,3.1 0 1 0 9.6,9.3" fill="none" stroke="#23404f" stroke-width="1.4"/><rect x="8.8" y="8.5" width="5.6" height="5.5" rx="0.8" fill="#c9ced2"/><path d="M10.2,8.8v-1.2a1.4,1.4 0 0 1 2.8,0v1.2" fill="none" stroke="#c9ced2" stroke-width="1"/></svg>
<div class="t " style="left:1440px;top:52px;height:23px;line-height:23px;font-size:11px;color:#bbb;letter-spacing:0.244px;">AbstractBeanFactory.java</div>
<svg style="left:1578.0px;top:59.5px" width="7" height="7" viewBox="0 0 7 7"><path d="M0.3,0.3L6.7,6.7M6.7,0.3L0.3,6.7" stroke="#7e8284" stroke-width="1.1"/></svg>
<svg style="left:1603.5px;top:56px" width="16" height="16" viewBox="0 0 16 16"><path d="M5,0.3H11.2V9.4H1.5V3.8z" fill="#98a2a8"/><path d="M1.5,3.8L5,0.3V3.8z" fill="#626b70"/><rect x="0" y="9.3" width="15.3" height="6.4" fill="#c8913a"/><path d="M6,10.5L3.6,12.5L6,14.5M9.3,10.5L11.7,12.5L9.3,14.5" fill="none" stroke="#3a2c12" stroke-width="1.2"/></svg>
<div class="t " style="left:1622px;top:52px;height:23px;line-height:23px;font-size:11px;color:#bbb;letter-spacing:0.496px;">mybatis-config.xml</div>
<svg style="left:1729.0px;top:59.5px" width="7" height="7" viewBox="0 0 7 7"><path d="M0.3,0.3L6.7,6.7M6.7,0.3L0.3,6.7" stroke="#7e8284" stroke-width="1.1"/></svg>
<svg style="left:1750.5px;top:61.5px" width="10" height="6" viewBox="0 0 10 6"><path d="M0,0h5.5L2.75,3.6z" fill="#9c9e9f"/></svg>
<svg style="left:1757.5px;top:59px" width="9" height="10" viewBox="0 0 9 10"><path d="M0,0.5h8M0,3h8M0,5.5h8M0,8h8" stroke="#a7a9aa" stroke-width="1"/></svg>
<div class="t " style="left:1767.5px;top:52px;height:23px;line-height:23px;font-size:9px;color:#bbb;">1</div>
<div id="editor" class="a">
<div id="gutter" class="a"></div>
<div class="r" style="left:60px;top:209px;width:1291px;height:18px;background:#323232;"></div>
<div class="r" style="left:103px;top:0px;width:1px;height:465px;background:#373737;"></div>
<div class="r" style="left:139px;top:137px;width:1px;height:18px;background:#373737;"></div>
<div class="r" style="left:139px;top:263px;width:1px;height:54px;background:#373737;"></div>
<div class="r" style="left:1145px;top:0px;width:1px;height:465px;background:#454545;"></div>
<div class="r" style="left:1338.5px;top:2px;width:9.5px;height:9px;background:#c59a25;"></div>
<div class="r" style="left:1336px;top:50px;width:14px;height:2px;background:#d4a017;"></div>
<div class="r" style="left:1336px;top:400px;width:14px;height:2px;background:#d4a017;"></div>
<div class="r" style="left:1339px;top:216px;width:8px;height:176px;border-radius:4px;background:#585858"></div>
<div class="ln" style="top:-6px">29</div>
<div class="cl" style="top:-6px">            <span class="tg">&lt;property</span> <span class="an">name</span><span class="av">="forceBigDecimals"</span> <span class="an">value</span><span class="av">="false"</span><span class="tg">/&gt;</span></div>
<div class="ln" style="top:12px">30</div>
<div class="cl" style="top:12px">        <span class="tg">&lt;/javaTypeResolver&gt;</span></div>
<div class="ln" style="top:30px">31</div>
<div class="ln" style="top:48px">32</div>
<div class="cl" style="top:48px">        <span class="cm">&lt;!––<span class="cj" style="width:120px">配置生成的实体包</span></span></div>
<div class="ln" style="top:66px">33</div>
<div class="cl" style="top:66px">            <span class="cm">targetPackage<span class="cj" style="width:225px">：生成的实体包位置，默认存放在</span>src<span class="cj" style="width:45px">目录下</span></span></div>
<div class="ln" style="top:84px">34</div>
<div class="cl" style="top:84px">            <span class="cm">targetProject<span class="cj" style="width:90px">：目标工程名</span></span></div>
<div class="ln" style="top:102px">35</div>
<div class="cl" style="top:102px">         <span class="cm">––&gt;</span></div>
<div class="ln" style="top:120px">36</div>
<div class="cl" style="top:120px">        <span class="tg">&lt;javaModelGenerator</span> <span class="an">targetPackage</span><span class="av">="con.<span class="wv">ssmtest<svg style="left:0;top:15px" width="63" height="3"><path d="M0,2L2,0L4,2L6,0L8,2L10,0L12,2L14,0L16,2L18,0L20,2L22,0L24,2L26,0L28,2L30,0L32,2L34,0L36,2L38,0L40,2L42,0L44,2L46,0L48,2L50,0L52,2L54,0L56,2L58,0L60,2L62,0" fill="none" stroke="#5d8a52" stroke-width="0.9"/></svg></span>.bean"</span></div>
<div class="ln" style="top:138px">37</div>
<div class="cl" style="top:138px">                            <span class="an">targetProject</span><span class="av">="src/main/java"</span><span class="tg"> /&gt;</span></div>
<div class="ln" style="top:156px">38</div>
<div class="ln" style="top:174px">39</div>
<div class="cl" style="top:174px">        <span class="cm">&lt;!–– <span class="cj" style="width:300px">实体包对应映射文件位置及名称，默认存放在</span>src<span class="cj" style="width:45px">目录下</span> ––&gt;</span></div>
<div class="ln" style="top:192px">40</div>
<div class="cl" style="top:192px">        <span class="tg">&lt;sqlMapGenerator</span> <span class="an">targetPackage</span><span class="av">="mapper"</span> <span class="an">targetProject</span><span class="av">="src/main/resources"</span><span class="tg">/&gt;</span></div>
<div class="ln" style="top:210px">41</div>
<div class="ln" style="top:228px">42</div>
<div class="cl" style="top:228px">        <span class="cm">&lt;!–– <span class="cj" style="width:30px">指定</span>dao<span class="cj" style="width:120px">接口生成的位置，</span>mapper<span class="cj" style="width:30px">接口</span> ––&gt;</span></div>
<div class="ln" style="top:246px">43</div>
<div class="cl" style="top:246px">        <span class="tg">&lt;javaClientGenerator</span> <span class="an">type</span><span class="av">="<span class="wv">XMLMAPPER<svg style="left:0;top:15px" width="81" height="3"><path d="M0,2L2,0L4,2L6,0L8,2L10,0L12,2L14,0L16,2L18,0L20,2L22,0L24,2L26,0L28,2L30,0L32,2L34,0L36,2L38,0L40,2L42,0L44,2L46,0L48,2L50,0L52,2L54,0L56,2L58,0L60,2L62,0L64,2L66,0L68,2L70,0L72,2L74,0L76,2L78,0L80,2" fill="none" stroke="#5d8a52" stroke-width="0.9"/></svg></span>"</span></div>
<div class="ln" style="top:264px">44</div>
<div class="cl" style="top:264px">                             <span class="an">targetPackage</span><span class="av">="con.<span class="wv">ssmtest<svg style="left:0;top:15px" width="63" height="3"><path d="M0,2L2,0L4,2L6,0L8,2L10,0L12,2L14,0L16,2L18,0L20,2L22,0L24,2L26,0L28,2L30,0L32,2L34,0L36,2L38,0L40,2L42,0L44,2L46,0L48,2L50,0L52,2L54,0L56,2L58,0L60,2L62,0" fill="none" stroke="#5d8a52" stroke-width="0.9"/></svg></span>.dao"</span></div>
<div class="ln" style="top:282px">45</div>
<div class="cl" style="top:282px">                             <span class="an">targetProject</span><span class="av">="src/main/java"</span><span class="tg">&gt;</span></div>
<div class="ln" style="top:300px">46</div>
<div class="cl" style="top:300px">            <span class="tg">&lt;property</span> <span class="an">name</span><span class="av">="enableSubPackages"</span> <span class="an">value</span><span class="av">="true"</span><span class="tg"> /&gt;</span></div>
<div class="ln" style="top:318px">47</div>
<div class="cl" style="top:318px">        <span class="tg">&lt;/javaClientGenerator&gt;</span></div>
<div class="ln" style="top:336px">48</div>
<div class="ln" style="top:354px">49</div>
<div class="cl" style="top:354px">        <span class="cm">&lt;!–– <span class="cj" style="width:45px">配置表</span></span></div>
<div class="ln" style="top:372px">50</div>
<div class="cl" style="top:372px">            <span class="cm">schema<span class="cj" style="width:75px">：不用填写</span></span></div>
<div class="ln" style="top:390px">51</div>
<div class="cl" style="top:390px">            <span class="cm">tableName: <span class="cj" style="width:30px">表名</span></span></div>
<div class="ln" style="top:408px">52</div>
<div class="cl" style="top:408px">            <span class="cm">enableCountByExample<span class="cj" style="width:15px">、</span>enableSelectByExample<span class="cj" style="width:15px">、</span>enableDeleteByExample<span class="cj" style="width:15px">、</span>enableUpdateByExample<span class="cj" style="width:15px">、</span>selectByExampleQueryId:</span></div>
<div class="ln" style="top:426px">53</div>
<div class="cl" style="top:426px">            <span class="cm"><span class="cj" style="width:135px">去除自动生成的例子</span></span></div>
<div class="ln" style="top:444px">54</div>
<div class="cl" style="top:444px">        <span class="cm">––&gt;</span></div>
<div class="ln" style="top:462px">55</div>
<div class="cl" style="top:462px">                  <span class="cm"><span class="cj" style="width:150px">指定数据库表的生成策</span></span></div>
<svg style="left:55.0px;top:15px" width="9" height="10" viewBox="0 0 9 10"><path d="M0.5,9.5h8v-5.5l-4,-4l-4,4z" fill="#313335" stroke="#6b6d6e" stroke-width="1"/><path d="M2.5,5.5h4" stroke="#6b6d6e" stroke-width="1"/></svg>
<svg style="left:55.0px;top:51px" width="9" height="10" viewBox="0 0 9 10"><path d="M0.5,0.5h8v5.5l-4,4l-4,-4z" fill="#313335" stroke="#6b6d6e" stroke-width="1"/><path d="M2.5,4.5h4" stroke="#6b6d6e" stroke-width="1"/></svg>
<svg style="left:55.0px;top:105px" width="9" height="10" viewBox="0 0 9 10"><path d="M0.5,9.5h8v-5.5l-4,-4l-4,4z" fill="#313335" stroke="#6b6d6e" stroke-width="1"/><path d="M2.5,5.5h4" stroke="#6b6d6e" stroke-width="1"/></svg>
<svg style="left:55.0px;top:123px" width="9" height="10" viewBox="0 0 9 10"><path d="M0.5,0.5h8v5.5l-4,4l-4,-4z" fill="#313335" stroke="#6b6d6e" stroke-width="1"/><path d="M2.5,4.5h4" stroke="#6b6d6e" stroke-width="1"/></svg>
<svg style="left:55.0px;top:141px" width="9" height="10" viewBox="0 0 9 10"><path d="M0.5,9.5h8v-5.5l-4,-4l-4,4z" fill="#313335" stroke="#6b6d6e" stroke-width="1"/><path d="M2.5,5.5h4" stroke="#6b6d6e" stroke-width="1"/></svg>
<svg style="left:55.0px;top:249px" width="9" height="10" viewBox="0 0 9 10"><path d="M0.5,0.5h8v5.5l-4,4l-4,-4z" fill="#313335" stroke="#6b6d6e" stroke-width="1"/><path d="M2.5,4.5h4" stroke="#6b6d6e" stroke-width="1"/></svg>
<svg style="left:55.0px;top:321px" width="9" height="10" viewBox="0 0 9 10"><path d="M0.5,9.5h8v-5.5l-4,-4l-4,4z" fill="#313335" stroke="#6b6d6e" stroke-width="1"/><path d="M2.5,5.5h4" stroke="#6b6d6e" stroke-width="1"/></svg>
<svg style="left:55.0px;top:357px" width="9" height="10" viewBox="0 0 9 10"><path d="M0.5,0.5h8v5.5l-4,4l-4,-4z" fill="#313335" stroke="#6b6d6e" stroke-width="1"/><path d="M2.5,4.5h4" stroke="#6b6d6e" stroke-width="1"/></svg>
<svg style="left:55.0px;top:447px" width="9" height="10" viewBox="0 0 9 10"><path d="M0.5,9.5h8v-5.5l-4,-4l-4,4z" fill="#313335" stroke="#6b6d6e" stroke-width="1"/><path d="M2.5,5.5h4" stroke="#6b6d6e" stroke-width="1"/></svg>
<svg style="left:73.5px;top:193.5px" width="11" height="16" viewBox="0 0 11 16"><path d="M5.5,0.3a5.2,5.2 0 0 1 3.2,9.3v1.6h-6.4v-1.6a5.2,5.2 0 0 1 3.2,-9.3z" fill="#f0a732"/><path d="M3,4.5l1.2,2.5l1.3,-2l1.3,2l1.2,-2.5" fill="none" stroke="#f8d48a" stroke-width="0.8"/><path d="M2.6,12h5.8M2.6,13.7h5.8M3.2,15.3h4.6" stroke="#9a9c9d" stroke-width="1.1"/></svg>
</div>
<div class="r" style="left:426px;top:540px;width:1351px;height:22px;background:#313335;"></div>
<div class="r" style="left:426px;top:540px;width:1351px;height:1px;background:#424446;"></div>
<div class="t " style="left:495.1px;top:542px;height:21px;line-height:21px;font-size:12px;color:#bbb;letter-spacing:0.443px;">generatorConfiguration</div>
<div class="t " style="left:639.5px;top:541px;height:21px;line-height:21px;font-size:12px;color:#7d8082;">›</div>
<div class="t " style="left:652.1px;top:542px;height:21px;line-height:21px;font-size:12px;color:#bbb;letter-spacing:0.428px;">context</div>
<div class="r" style="left:1777px;top:51px;width:20px;height:967px;background:#3c3f41;"></div>
<div class="r" style="left:1776px;top:51px;width:1px;height:967px;background:#515355;"></div>
<svg style="left:1780px;top:58px" width="14" height="18" viewBox="0 0 14 18"><g stroke="#b07fd0" stroke-width="1" fill="none"><path d="M3,3L1,1M11,3l2,-2M3,8H0.5M11,8h2.5M3,12l-2,3M11,12l2,3"/></g><circle cx="7" cy="4" r="2.6" fill="#b07fd0"/><ellipse cx="7" cy="9" rx="2.4" ry="2.6" fill="#b07fd0"/><ellipse cx="7" cy="14.5" rx="3" ry="3.2" fill="#b07fd0"/></svg>
<div class="a" style="left:1794px;top:80px;width:0;height:0;transform:rotate(90deg);transform-origin:0 0"><div class="t " style="left:0px;top:0px;height:14px;line-height:14px;font-size:11px;color:#bbb;position:static;display:block;letter-spacing:0.052px;">Ant Build</div></div>
<svg style="left:1780px;top:145.5px" width="14" height="14" viewBox="0 0 14 14"><g fill="#3f9fd0"><ellipse cx="7" cy="2.5" rx="6.5" ry="2.3"/><path d="M0.5,4.3c2,2 11,2 13,0v2.2c-2,2 -11,2 -13,0zM0.5,8c2,2 11,2 13,0v2.2c-2,2 -11,2 -13,0zM0.5,11.6c2,2 11,2 13,0v0.6c-2,2.4 -11,2.4 -13,0z"/></g></svg>
<div class="a" style="left:1794px;top:163px;width:0;height:0;transform:rotate(90deg);transform-origin:0 0"><div class="t " style="left:0px;top:0px;height:14px;line-height:14px;font-size:11px;color:#bbb;position:static;display:block;letter-spacing:0.176px;">Database</div></div>
<svg style="left:1780px;top:234.5px" width="14" height="11" viewBox="0 0 14 11"><path d="M1.8,10.5L4,2M4,4.5C5,1.5 8,1.5 7.6,4.5L6.4,10.5M7.6,4.5C8.8,1.5 12,1.5 11.4,4.8L10.4,10.5" fill="none" stroke="#3fa9d8" stroke-width="1.9" stroke-linecap="round"/></svg>
<div class="a" style="left:1794px;top:250.5px;width:0;height:0;transform:rotate(90deg);transform-origin:0 0"><div class="t " style="left:0px;top:0px;height:14px;line-height:14px;font-size:11px;color:#bbb;position:static;display:block;letter-spacing:0.192px;">Maven Projects</div></div>
<svg style="left:1780px;top:354px" width="14" height="13" viewBox="0 0 14 13"><path d="M1,3.5L5,0.5L12,6L8,9z" fill="#e8a53a"/><path d="M3,3.8L5.2,2L10,6L8,7.5z" fill="#3c3f41"/><path d="M5,8.5L8,12L13.5,5" fill="none" stroke="#35c246" stroke-width="1.8"/></svg>
<div class="a" style="left:1794px;top:372px;width:0;height:0;transform:rotate(90deg);transform-origin:0 0"><div class="t " style="left:0px;top:0px;height:14px;line-height:14px;font-size:11px;color:#bbb;position:static;display:block;letter-spacing:0.083px;">Bean Validation</div></div>
<div class="r" style="left:21px;top:562px;width:1756px;height:1px;background:#555759;"></div>
<div class="r" style="left:21px;top:563px;width:1756px;height:22px;background:#3c3f41;"></div>
<div class="t " style="left:26.5px;top:563px;height:22px;line-height:22px;font-size:11px;color:#9da0a2;letter-spacing:-0.562px;">Run</div>
<svg style="left:50px;top:567.5px" width="13" height="13" viewBox="0 0 14 14"><g fill="#3a7fa5"><circle cx="7" cy="7" r="4.6"/><rect x="5.7" y="0" width="2.6" height="14" transform="rotate(0 7 7)"/><rect x="5.7" y="0" width="2.6" height="14" transform="rotate(45 7 7)"/><rect x="5.7" y="0" width="2.6" height="14" transform="rotate(90 7 7)"/><rect x="5.7" y="0" width="2.6" height="14" transform="rotate(135 7 7)"/></g><circle cx="7" cy="7" r="2" fill="#3c3f41"/></svg>
<div class="t " style="left:68px;top:563px;height:22px;line-height:22px;font-size:11px;color:#9da0a2;letter-spacing:0.194px;">Maven</div>
<svg style="left:1728.5px;top:568px" width="12" height="12" viewBox="0 0 14 14"><g fill="#a7a9aa"><circle cx="7" cy="7" r="4.6"/><rect x="5.7" y="0" width="2.6" height="14" transform="rotate(0 7 7)"/><rect x="5.7" y="0" width="2.6" height="14" transform="rotate(45 7 7)"/><rect x="5.7" y="0" width="2.6" height="14" transform="rotate(90 7 7)"/><rect x="5.7" y="0" width="2.6" height="14" transform="rotate(135 7 7)"/></g><circle cx="7" cy="7" r="2" fill="#3c3f41"/></svg>
<svg style="left:1743px;top:573px" width="5" height="3" viewBox="0 0 5 3"><path d="M0,0h5L2.5,3z" fill="#a7a9aa"/></svg>
<svg style="left:1757.5px;top:567px" width="12" height="13" viewBox="0 0 12 13"><path d="M5.5,0v7.5M2.5,5L5.5,8L8.5,5" fill="none" stroke="#a7a9aa" stroke-width="1.2"/><rect x="0.5" y="9.5" width="10.5" height="2.6" fill="none" stroke="#a7a9aa" stroke-width="1"/><rect x="6" y="10" width="4.5" height="1.6" fill="#a7a9aa"/></svg>
<div class="r" style="left:21px;top:585px;width:60px;height:433px;background:#3c3f41;"></div>
<div class="r" style="left:50px;top:585px;width:1px;height:433px;background:#4b4d4f;"></div>
<div class="r" style="left:21px;top:584px;width:1756px;height:1px;background:#343638;"></div>
<svg style="left:29.5px;top:592.5px" width="11" height="14" viewBox="0 0 11 14"><path d="M0,0L11,7L0,14z" fill="#3daa49"/></svg>
<svg style="left:28px;top:616px" width="15" height="15" viewBox="0 0 15 15"><path d="M0,4L6,8.5L0,13z" fill="#595c5e"/><circle cx="9" cy="6.5" r="5.5" fill="#595c5e"/><rect x="8.2" y="3" width="1.6" height="4.5" fill="#3c3f41"/><rect x="8.2" y="8.5" width="1.6" height="1.6" fill="#3c3f41"/></svg>
<div class="r" style="left:25px;top:640px;width:22px;height:0;border-top:1px dotted #77797a"></div>
<div class="r" style="left:29px;top:649px;width:12px;height:12px;background:#595c5e;"></div>
<div class="r" style="left:30px;top:673px;width:3.5px;height:12px;background:#595c5e;"></div>
<div class="r" style="left:36.5px;top:673px;width:3.5px;height:12px;background:#595c5e;"></div>
<div class="r" style="left:25px;top:696px;width:22px;height:0;border-top:1px dotted #77797a"></div>
<svg style="left:28px;top:704px" width="14" height="15" viewBox="0 0 14 15"><rect x="0.5" y="0.5" width="5" height="4.5" fill="none" stroke="#8aa4b8"/><rect x="7.5" y="0.5" width="6" height="4.5" fill="none" stroke="#8aa4b8"/><rect x="0.5" y="7" width="13" height="3" fill="none" stroke="#9c9e9f"/><rect x="0.5" y="11.5" width="13" height="3" fill="none" stroke="#9c9e9f"/></svg>
<div class="r" style="left:25px;top:727px;width:22px;height:0;border-top:1px dotted #77797a"></div>
<svg style="left:27.5px;top:734px" width="15" height="16" viewBox="0 0 15 16"><circle cx="9.5" cy="5.5" r="4.6" fill="#b07fd0"/><path d="M4.5,7L8.5,11L5,12.5L3,10.5z" fill="#9c72b8"/><path d="M4,11.5L0.5,15.5" stroke="#b6b8b9" stroke-width="1.4"/><circle cx="11" cy="4" r="1.6" fill="#d9b8ee"/></svg>
<svg style="left:29px;top:761px" width="12" height="12" viewBox="0 0 12 12"><path d="M1,1L11,11M11,1L1,11" stroke="#e5493a" stroke-width="2.2"/></svg>
<div class="t " style="left:29px;top:781px;height:22px;line-height:22px;font-size:19px;color:#3b8fcc;font-weight:bold;">?</div>
<svg style="left:59px;top:592.5px" width="12" height="13" viewBox="0 0 12 13"><path d="M6,0L12,6.5H8V13H4V6.5H0z" fill="#595c5e"/></svg>
<svg style="left:59px;top:617px" width="12" height="13" viewBox="0 0 12 13"><path d="M6,13L12,6.5H8V0H4V6.5H0z" fill="#595c5e"/></svg>
<svg style="left:57.5px;top:641.5px" width="15" height="15" viewBox="0 0 15 15"><path d="M0,1.5h4M6,1.5h8.5M0,7.5h2.5M0,13.5h5M7.5,13.5h7" stroke="#7fb2d6" stroke-width="1.5"/><path d="M4.5,7.5h7.5a2,2 0 0 0 0,-3.2M6.8,5L4.2,7.5L6.8,10" fill="none" stroke="#7fb2d6" stroke-width="1.4"/><path d="M12.5,9.5L14.5,11.5L12.5,13.5" fill="none" stroke="#7fb2d6" stroke-width="1.2"/></svg>
<div class="r" style="left:54px;top:663px;width:23px;height:22px;border:1px solid #6f7274;border-radius:3px;box-sizing:border-box;background:#4a4d4f"></div>
<svg style="left:58px;top:667px" width="15" height="14" viewBox="0 0 15 14"><rect x="0.5" y="2.5" width="13" height="11" fill="none" stroke="#b4b6b7" stroke-width="1"/><rect x="0.5" y="2.5" width="13" height="2.5" fill="#b4b6b7"/><path d="M10.5,0v7M7.8,4.8L10.5,8L13.2,4.8" fill="none" stroke="#c77bdc" stroke-width="1.8"/></svg>
<svg style="left:58px;top:692px" width="14" height="14" viewBox="0 0 14 14"><rect x="2.5" y="0.5" width="9" height="3" fill="none" stroke="#7fb2d6"/><rect x="0.5" y="3.5" width="13" height="5.5" fill="#7fb2d6"/><rect x="3" y="7.5" width="8" height="6" fill="#3c3f41" stroke="#7fb2d6"/><rect x="5" y="10" width="4" height="1.5" fill="#7fb2d6"/></svg>
<svg style="left:58.5px;top:716px" width="13" height="15" viewBox="0 0 13 15"><path d="M4.5,1.5h4M0.5,3h12" stroke="#4f9bd4" stroke-width="1.6"/><path d="M1.8,4.5h9.4l-0.8,10h-7.8z" fill="#4f9bd4"/><path d="M4.6,6.5v6M6.5,6.5v6M8.4,6.5v6" stroke="#3c3f41" stroke-width="0.9"/></svg>
<div id="console" class="a">
<div class="co" style="top:-13.4px">[INFO] Building webTest Maven Webapp 0.0.1-SNAPSHOT</div>
<div class="co" style="top:6px">[INFO] ––––––––––––––––––––––––––––––––––––––––––––––––––––––––––––––––––––––––</div>
<div class="co" style="top:24px">[INFO]</div>
<div class="co" style="top:42px">[INFO] ––– mybatis–generator–maven–plugin:1.3.5:generate (default–cli) @ webTest –––</div>
<div class="co" style="top:60px">[INFO] Connecting to the Database</div>
<div class="co" style="top:78px">[INFO] Introspecting table t_TVType</div>
<div class="co" style="top:96px">[INFO] Generating Example class for table t_TVType</div>
<div class="co" style="top:114px">[INFO] Generating Record class for table t_TVType</div>
<div class="co" style="top:132px">[INFO] Generating Mapper Interface for table t_TVType</div>
<div class="co" style="top:150px">[INFO] Generating SQL Map for table t_TVType</div>
<div class="co" style="top:168px">[INFO] Saving file TVTypeMapper.xml</div>
<div class="co" style="top:186px">[INFO] Saving file TVTypeExample.java</div>
<div class="co" style="top:204px">[INFO] Saving file TVType.java</div>
<div class="co" style="top:222px">[INFO] Saving file TVTypeMapper.java</div>
<div class="co" style="top:240px">[INFO] ––––––––––––––––––––––––––––––––––––––––––––––––––––––––––––––––––––––––</div>
<div class="co" style="top:258px">[INFO] BUILD SUCCESS</div>
<div class="co" style="top:276px">[INFO] ––––––––––––––––––––––––––––––––––––––––––––––––––––––––––––––––––––––––</div>
<div class="co" style="top:294px">[INFO] Total time: 1.076 s</div>
<div class="co" style="top:312px">[INFO] Finished at: 2017–08–25T14:56:58+08:00</div>
<div class="co" style="top:330px">[INFO] Final Memory: 10M/156M</div>
<div class="co" style="top:348px">[INFO] ––––––––––––––––––––––––––––––––––––––––––––––––––––––––––––––––––––––––</div>
<div class="co" style="top:384px">Process finished with exit code 0</div>
<div class="r" style="left:1688.6px;top:160px;width:6px;height:257px;border-radius:3px;background:#4d4f50"></div>
<div class="r" style="left:13.5px;top:422px;width:697px;height:8px;border-radius:4px;background:#4d4f50"></div>
</div>
<div class="r" style="left:0px;top:1018px;width:1797px;height:24px;background:#3c3f41;"></div>
<div class="r" style="left:0px;top:1018px;width:1797px;height:1px;background:#555759;"></div>
<div class="r" style="left:21px;top:1019px;width:67px;height:23px;background:#2d2f30;"></div>
<svg style="left:30px;top:1024px" width="11" height="13" viewBox="0 0 11 13"><path d="M0,0L11,6.5L0,13z" fill="#3daa49"/></svg>
<div class="t " style="left:47px;top:1019px;height:23px;line-height:23px;font-size:11px;color:#e0e0e0;letter-spacing:-0.070px;">4: Run</div>
<div class="r" style="left:47px;top:1037px;width:6px;height:1px;background:#e0e0e0;"></div>
<svg style="left:99px;top:1024px" width="13" height="13" viewBox="0 0 13 13"><rect x="0" y="0" width="7" height="7" rx="1" fill="#e8a53a"/><path d="M1.5,3.5l1.6,1.6l2.6,-3" fill="none" stroke="#3c3f41" stroke-width="1.2"/><circle cx="8.5" cy="6" r="3" fill="#d7a77c"/><path d="M3.5,13c0,-4 10,-4 10,0z" fill="#4a88c7"/><rect x="5.5" y="2.8" width="6" height="1.8" fill="#555"/></svg>
<div class="t " style="left:116px;top:1019px;height:23px;line-height:23px;font-size:11px;color:#bbb;letter-spacing:0.056px;">6: TODO</div>
<div class="r" style="left:116px;top:1037px;width:6px;height:1px;background:#bbb;"></div>
<svg style="left:183px;top:1024px" width="14" height="13" viewBox="0 0 14 13"><rect x="0.5" y="0.5" width="11" height="10" fill="none" stroke="#9c9e9f"/><path d="M0.5,3h11" stroke="#9c9e9f"/><circle cx="8.5" cy="8" r="4.6" fill="#3f8fd8"/><path d="M6,6.8l2.5,-1.6l2.6,2l-1.5,3l-2.6,-0.5z" fill="#f3d04c"/></svg>
<div class="t " style="left:201px;top:1019px;height:23px;line-height:23px;font-size:11px;color:#bbb;letter-spacing:0.222px;">Application Servers</div>
<svg style="left:324px;top:1024.5px" width="13" height="12" viewBox="0 0 13 12"><rect x="0.5" y="0.5" width="12" height="11" fill="#1e1f20" stroke="#9c9e9f"/><path d="M2.5,4L5,6L2.5,8M6,8.5h4" fill="none" stroke="#d0d0d0" stroke-width="1.1"/></svg>
<div class="t " style="left:341px;top:1019px;height:23px;line-height:23px;font-size:11px;color:#bbb;letter-spacing:0.303px;">Terminal</div>
<svg style="left:409px;top:1024px" width="13" height="13" viewBox="0 0 13 13"><rect x="0" y="0" width="9" height="11" fill="#4a88c7"/><rect x="5.5" y="6" width="7.5" height="7" fill="#e8a53a"/><path d="M7,8h2M7,9.8h2M7,11.5h2M10.2,8h1.6M10.2,9.8h1.6M10.2,11.5h1.6" stroke="#3c3f41" stroke-width="0.9"/></svg>
<div class="t " style="left:426px;top:1019px;height:23px;line-height:23px;font-size:11px;color:#bbb;letter-spacing:0.237px;">Java Enterprise</div>
<svg style="left:527px;top:1024px" width="14" height="13" viewBox="0 0 14 13"><path d="M1.5,12.5C-1,6 5,1.5 13.5,0.5C14,8 10,13.5 1.5,12.5z" fill="#62b543"/><path d="M1,13L6,8" stroke="#3c3f41" stroke-width="0.8"/></svg>
<div class="t " style="left:545px;top:1019px;height:23px;line-height:23px;font-size:11px;color:#bbb;letter-spacing:0.201px;">Spring</div>
<svg style="left:1694.5px;top:1022.5px" width="16" height="15" viewBox="0 0 16 15"><circle cx="7" cy="7" r="7" fill="#5fb865"/><path d="M10,12.5l5,2.3l-2.2,-4.5z" fill="#5fb865"/><text x="4.4" y="10.5" font-family="Liberation Sans" font-size="10" font-weight="bold" fill="#2b2b2b">1</text></svg>
<div class="t " style="left:1715px;top:1019px;height:23px;line-height:23px;font-size:11px;color:#bbb;letter-spacing:0.084px;">Event Log</div>
<div class="r" style="left:0px;top:1041px;width:1797px;height:21px;background:#3c3f41;"></div>
<div class="r" style="left:0px;top:1041px;width:1797px;height:1px;background:#4b4d4f;"></div>
<div class="r" style="left:4px;top:1045px;width:15px;height:13px;border:1px solid #9c9e9f;box-sizing:border-box;background:#5b5e60"></div>
<div class="t " style="left:31px;top:1042px;height:20px;line-height:20px;font-size:11px;color:#bbb;letter-spacing:0.286px;">Unregistered VCS root detected: The directory /Users/mac is under Git, but is not registered in the Settings. // Add root  Configure  Ignore (3 minutes ago)</div>
<div class="t " style="left:1641px;top:1042px;height:20px;line-height:20px;font-size:11px;color:#bbb;letter-spacing:-0.355px;">41:1</div>
<div class="t " style="left:1672px;top:1042px;height:20px;line-height:20px;font-size:11px;color:#bbb;letter-spacing:0.078px;">LF</div>
<svg style="left:1686px;top:1047px" width="5" height="9" viewBox="0 0 5 9"><path d="M0,3.5L2.5,0.5L5,3.5zM0,5.5L2.5,8.5L5,5.5z" fill="#a7a9aa"/></svg>
<div class="t " style="left:1705px;top:1042px;height:20px;line-height:20px;font-size:11px;color:#9da0a2;letter-spacing:0.366px;">UTF-8</div>
<svg style="left:1753px;top:1045.5px" width="11" height="12" viewBox="0 0 11 12"><path d="M1.5,5.5v-2.5a2.5,2.5 0 0 1 5,0v1" fill="none" stroke="#a7a9aa" stroke-width="1.4"/><rect x="3.5" y="5.5" width="7" height="6" rx="1" fill="#a7a9aa"/><rect x="6.3" y="7.5" width="1.5" height="2.2" fill="#3c3f41"/></svg>
<svg style="left:1776px;top:1043.5px" width="13" height="16" viewBox="0 0 13 16"><path d="M2.5,1.5h8l1,5h-10z" fill="none" stroke="#a7a9aa" stroke-width="1"/><path d="M0,6.5h13" stroke="#a7a9aa" stroke-width="1.2"/><circle cx="4.3" cy="9.5" r="1.6" fill="none" stroke="#a7a9aa"/><circle cx="8.7" cy="9.5" r="1.6" fill="none" stroke="#a7a9aa"/><path d="M3,15c0,-3 7,-3 7,0" fill="none" stroke="#a7a9aa" stroke-width="1.1"/></svg>
<svg style="left:0px;top:0px" width="1797" height="1062" viewBox="0 0 1797 1062"><path d="M300.1,206.5L343.7,169.0L338.3,188.6L388.3,190.2L389.3,199.9L341.9,214.1L351.5,231.7z" fill="#fd461d"/><circle cx="388.6" cy="195.1" r="4.9" fill="#fd461d"/></svg>
<svg style="left:0px;top:0px" width="1797" height="1062" viewBox="0 0 1797 1062"><path d="M288.1,287.5L312.4,272.0L308.7,281.5L334.6,286.0L334.8,291.0L308.1,294.4L311.8,304.0z" fill="#fd461d"/><circle cx="334.6" cy="288.5" r="2.5" fill="#fd461d"/></svg>
<svg style="left:0px;top:0px" width="1797" height="1062" viewBox="0 0 1797 1062"><path d="M298.0,388.6L317.0,368.1L315.9,377.9L349.3,373.6L351.3,378.2L319.0,390.5L324.9,398.8z" fill="#fd461d"/><circle cx="350.3" cy="375.9" r="2.5" fill="#fd461d"/></svg>
<svg style="left:0px;top:0px" width="1797" height="1062" viewBox="0 0 1797 1062"><path d="M1642.7,51.3L1602.2,64.5L1615.4,71.6L1598.0,102.9L1603.3,107.2L1631.6,81.0L1639.9,94.1z" fill="#fd461d"/><circle cx="1600.7" cy="104.8" r="3.3" fill="#fd461d"/></svg>
<svg style="left:0px;top:0px" width="1797" height="1062" viewBox="0 0 1797 1062"><path d="M319.0,857.1L387.6,836.0L371.6,855.6L454.3,891.9L452.3,902.6L362.1,886.9L364.6,911.7z" fill="#fd461d"/><circle cx="452.6" cy="897.1" r="5.5" fill="#fd461d"/></svg>
</div>
</body></html>
